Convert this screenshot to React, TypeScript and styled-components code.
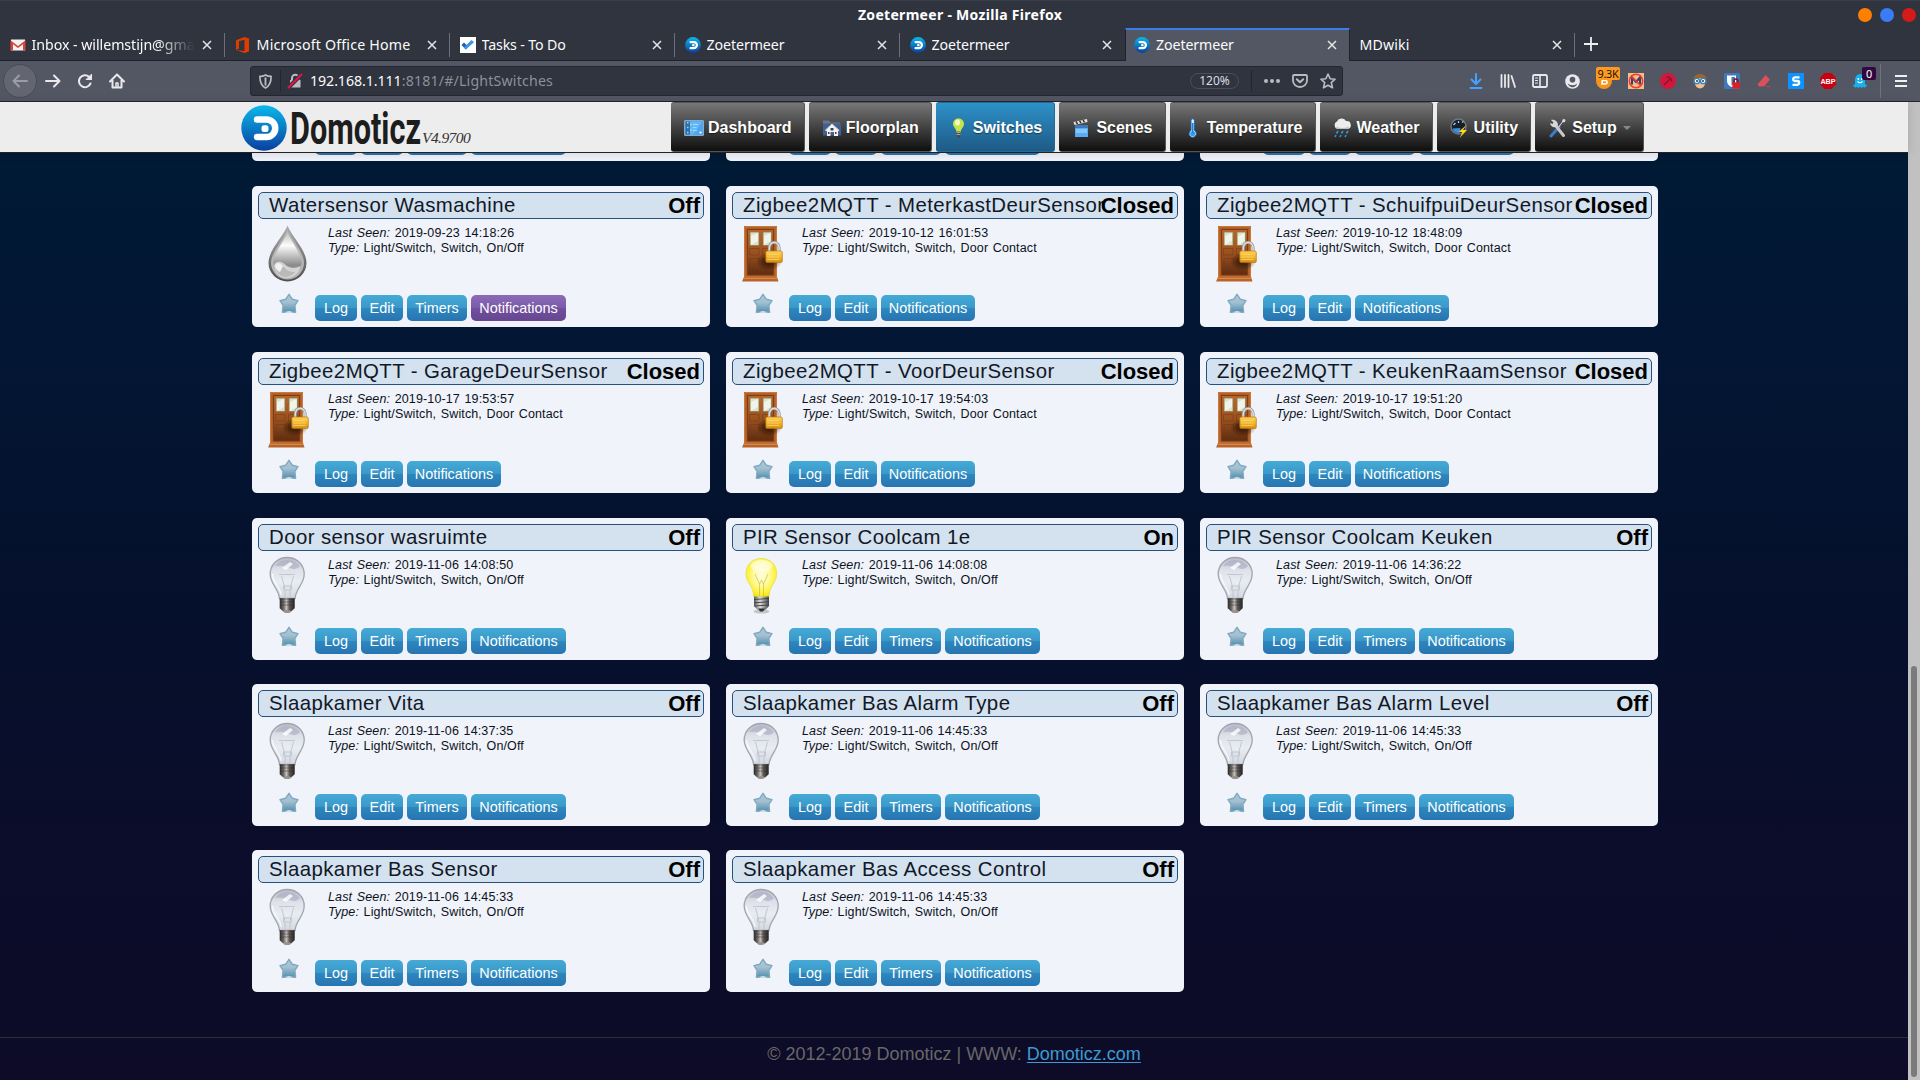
import React from 'react';
import styled, { createGlobalStyle, css } from 'styled-components';

const GlobalStyle = createGlobalStyle`
  * { box-sizing: border-box; }
  html, body { margin: 0; padding: 0; overflow: hidden; }
  body { font-family: "Liberation Sans", Arial, sans-serif; background: #0c0b28; }
`;

const UI_FONT = '"Noto Sans", "Open Sans", sans-serif';

const Screen = styled.div`
  width: 1920px;
  height: 1080px;
  display: flex;
  flex-direction: column;
  overflow: hidden;
`;

/* ---------- Browser window ---------- */

const TitleBar = styled.div`
  height: 28px;
  flex: none;
  display: grid;
  grid-template-columns: 1fr auto 1fr;
  align-items: center;
  background: #2f343f;
  border-top: 1px solid #383d49;
  color: #fff;
  font: bold 14px/27px ${UI_FONT};
  letter-spacing: 0.3px;
`;

const WindowButtons = styled.div`
  display: flex;
  justify-content: flex-end;
  gap: 8px;
  padding-right: 4px;
`;

const WindowButton = styled.span<{ $color: string }>`
  width: 14px;
  height: 14px;
  border-radius: 50%;
  background: ${p => p.$color};
`;

const TabStrip = styled.div`
  height: 33px;
  flex: none;
  display: flex;
  background: #2f343f;
  border-bottom: 1px solid #1f222b;
`;

const Tab = styled.div<{ $active?: boolean; $line?: boolean }>`
  width: 225px;
  height: 32px;
  flex: none;
  display: flex;
  align-items: center;
  gap: 6px;
  padding: 2px 13px 0 9.6px;
  color: #fbfbfb;
  font: 14.2px/20px ${UI_FONT};
  background-repeat: no-repeat;
  ${p => p.$line && css`
    background-image: linear-gradient(#6b6f79, #6b6f79);
    background-size: 1px 24px;
    background-position: 100% 5px;
  `}
  ${p => p.$active && css`
    height: 33px;
    padding: 0 12px 1px 8px;
    background: #535763;
    border-top: 2px solid #3b7bea;
    border-left: 1px solid #1f222b;
    border-right: 1px solid #1f222b;
  `}
`;

const TabLabel = styled.span<{ $fade?: boolean; $tight?: number }>`
  flex: 1;
  min-width: 0;
  white-space: nowrap;
  overflow: hidden;
  letter-spacing: ${p => p.$tight ?? -0.1}px;
  ${p => p.$fade && css`
    mask-image: linear-gradient(to right, #000 76%, transparent 99%);
  `}
`;

const NewTab = styled.div`
  width: 32px;
  display: flex;
  align-items: center;
  justify-content: center;
`;

const Toolbar = styled.div`
  height: 41px;
  flex: none;
  display: flex;
  align-items: center;
  background: #535763;
  border-bottom: 1px solid #23262f;
`;

const NavCluster = styled.div`
  width: 250px;
  display: flex;
  align-items: center;
  padding-left: 3px;
`;

const BackButton = styled.span`
  width: 34px;
  height: 34px;
  border-radius: 50%;
  border: 1px solid #474b56;
  background: #636671;
  display: grid;
  place-items: center;
`;

const IconCell = styled.span<{ $w?: number }>`
  width: ${p => p.$w ?? 32}px;
  height: 32px;
  flex: none;
  display: grid;
  place-items: center;
`;

const UrlBar = styled.div`
  width: 1093px;
  height: 30px;
  display: flex;
  align-items: center;
  background: #2f343f;
  border: 1px solid #232731;
  border-radius: 3px;
`;

const UrlText = styled.span`
  flex: 1;
  padding-left: 2px;
  color: #8d9099;
  font: 14.2px/20px ${UI_FONT};
  letter-spacing: 0.17px;
  b {
    font-weight: 400;
    color: #fbfbfb;
    letter-spacing: -0.07px;
  }
`;

const Divider = styled.span<{ $h?: number; $color?: string; $margin?: string }>`
  width: 1px;
  height: ${p => p.$h ?? 22}px;
  margin: ${p => p.$margin ?? '0'};
  background: ${p => p.$color ?? '#23262f'};
`;

const ZoomPill = styled.span`
  width: 49px;
  height: 16px;
  margin-right: 12px;
  border: 1px solid #4a4e59;
  border-radius: 8px;
  color: #dcdde0;
  text-align: center;
  font: 12px/14px ${UI_FONT};
`;

const Extensions = styled.div`
  display: flex;
  align-items: center;
  margin-left: auto;
`;

const ExtensionCell = styled(IconCell)`
  position: relative;
`;

const Badge = styled.span<{ $bg: string; $fg: string; $x: number; $w: number }>`
  position: absolute;
  top: 2px;
  left: ${p => p.$x}px;
  width: ${p => p.$w}px;
  height: 13px;
  border-radius: 2px;
  background: ${p => p.$bg};
  color: ${p => p.$fg};
  text-align: center;
  font: 10.8px/13px ${UI_FONT};
  letter-spacing: -0.2px;
`;

/* ---------- Page ---------- */

const Viewport = styled.div`
  flex: 1;
  min-height: 0;
  display: flex;
`;

const Page = styled.div`
  width: 1908px;
  display: flex;
  flex-direction: column;
  background: linear-gradient(#001b36 0%, #021734 20%, #05102c 52%, #0b0d2a 76%, #0d0b28 100%);
`;

const Scrollbar = styled.div`
  width: 12px;
  padding: 564px 3px 3px;
  background: #c1c1c1;
`;

const Thumb = styled.div`
  height: 411px;
  border-radius: 3px;
  background: #7b7b7b;
`;

const Header = styled.header`
  height: 51px;
  flex: none;
  display: flex;
  padding-left: 241px;
  background: #ededed;
  border-bottom: 1px solid #222;
  box-shadow: 0 1px 10px rgba(0, 0, 0, 0.12);
  z-index: 1;
`;

const Brand = styled.div`
  width: 430px;
  display: flex;
  align-items: flex-start;
  padding-top: 3px;
`;

const Version = styled.span`
  padding-top: 24px;
  color: #333;
  font: italic 15.6px/18px "Liberation Serif", serif;
  letter-spacing: -0.6px;
`;

const Menu = styled.nav`
  display: flex;
  gap: 4px;
`;

const MenuItem = styled.a<{ $active?: boolean }>`
  height: 50px;
  display: flex;
  align-items: center;
  padding: 1px 12.2px 0 13px;
  border: 1px solid ${p => (p.$active ? '#256b97' : '#555')};
  border-width: 1px 1px 1px 0;
  border-radius: 3px;
  background: ${p => (p.$active
    ? 'linear-gradient(#2d91c8, #1e5a86)'
    : 'linear-gradient(#777 0%, #484848 45%, #0e0e0e 100%)')};
  color: #fff;
  font-size: 16px;
  font-weight: bold;
  text-shadow: 0 1px 1px rgba(0, 0, 0, 0.5);
  svg { margin-right: 4px; }
`;

const Caret = styled.span`
  margin-left: 6px;
  border: 4.5px solid transparent;
  border-top-color: #888;
  border-bottom: 0;
`;

const Content = styled.main`
  flex: 1;
  min-height: 0;
  overflow: hidden;
  display: flex;
  flex-direction: column;
  justify-content: flex-end;
`;

const Grid = styled.div`
  flex: none;
  display: grid;
  grid-template-columns: repeat(3, 458px);
  grid-auto-rows: 141.5px;
  gap: 24.6px 16px;
  padding-left: 252px;
  margin-bottom: 45.25px;
`;

const CardBox = styled.section`
  display: flex;
  flex-direction: column;
  padding: 6px;
  border-radius: 5px;
  background: #f0f3f9;
`;

const CardTitle = styled.div`
  height: 27px;
  display: flex;
  border: 1px solid #26507e;
  border-radius: 5px;
  padding: 0 3px 0 10px;
  background: #d4e1ee;
  white-space: nowrap;
`;

const CardName = styled.span`
  flex: 1;
  min-width: 0;
  color: #111827;
  font-size: 20.4px;
  line-height: 24.6px;
  letter-spacing: 0.42px;
`;

const Status = styled.span`
  color: #000;
  font-size: 22px;
  font-weight: bold;
  line-height: 25.5px;
`;

const CardBody = styled.div`
  height: 76.5px;
  display: flex;
  padding: 5px 0 0 1px;
`;

const Details = styled.div`
  margin: 2px 0 0 11px;
  color: #0c1222;
  font-size: 12.5px;
  line-height: 15px;
  letter-spacing: 0.13px;
  word-spacing: 1px;
`;

const CardActions = styled.div`
  display: flex;
  gap: 4px;
  padding-left: 21px;
`;

const StarSlot = styled.span`
  width: 32px;
  margin-top: -2px;
  svg { display: block; }
`;

const ActionButton = styled.button<{ $w: number; $purple?: boolean }>`
  width: ${p => p.$w}px;
  height: 26px;
  border: 0;
  border-radius: 5px;
  padding: 0;
  color: #fff;
  text-align: center;
  font: 14.4px/26px "Liberation Sans", Arial, sans-serif;
  background: ${p => (p.$purple
    ? 'linear-gradient(#8b6bb7 0%, #7b5aa9 50%, #714fa0 50%, #674690 100%)'
    : 'linear-gradient(#45aad6 0%, #3a98c8 50%, #2d88bf 50%, #2874b0 100%)')};
`;

const Footer = styled.footer`
  flex: none;
  height: 43px;
  border-top: 1px solid #2c2c36;
  color: #686868;
  text-align: center;
  font-size: 18px;
  line-height: 32px;
  a {
    color: #3d9bd0;
    text-decoration: underline;
    text-decoration-thickness: 1px;
    text-underline-offset: 2px;
  }
`;

/* ---------- Drawings ---------- */

const DomoticzMark = ({ size }: { size: number }) => (
  <svg width={size} height={size} viewBox="0 0 46 46" style={{ flex: 'none' }}>
    <defs>
      <linearGradient id="mark" x1="0" y1="0" x2="0" y2="1">
        <stop offset="0" stopColor="#0bb8ea" />
        <stop offset="1" stopColor="#0a3fa0" />
      </linearGradient>
    </defs>
    <circle cx="23" cy="23" r="22.7" fill="url(#mark)" />
    <path d="M16 14.500H25.500A8.700 8.700 0 0 1 25.500 32H16" fill="none" stroke="#fff" strokeWidth="6.500" strokeLinecap="round" />
    <rect x="20.500" y="20.300" width="7" height="6.600" rx="2.500" fill="#fff" />
  </svg>
);

const Wordmark = () => (
  <svg width="135" height="46" viewBox="0 0 135 46">
    <text x="3" y="39" fontFamily='"Roboto", sans-serif' fontWeight="700" fontSize="44" textLength="131" lengthAdjust="spacingAndGlyphs" fill="#1d1d1d">Domoticz</text>
  </svg>
);

const CloseX = () => (
  <svg width="10" height="10" viewBox="0 0 10 10" style={{ flex: 'none' }}>
    <path d="M1 1L9 9M9 1L1 9" stroke="#e6e6e8" strokeWidth="1.5" fill="none" />
  </svg>
);

const Gmail = () => (
  <svg width="16" height="16" viewBox="0 0 16 16">
    <path d="M1 2.500h14v11H1z" fill="#f2f2f2" />
    <path d="M0.500 13.500V3.200L8 9l7.500-5.800v10.300H13V7.200L8 11 3 7.200v6.300z" fill="#d9443a" />
  </svg>
);

const Office = () => (
  <svg width="16" height="16" viewBox="0 0 16 16">
    <path fillRule="evenodd" d="M1 3.300L9.500 0l4.500 1.500v13L9.500 16 1 13l8.500 1V2.700L4 4.200v7.200L1 13z" fill="#e03c00" />
  </svg>
);

const Todo = () => (
  <svg width="16" height="16" viewBox="0 0 16 16">
    <path d="M0 0h16v16H0z" fill="#fff" />
    <path d="M1.500 8L4 5.500l4 4L5.800 12.500z" fill="#1d5db8" />
    <path d="M5.800 12.500L3.800 10.400 11.500 3 14 5.200z" fill="#3a92ea" />
  </svg>
);

const Stroke = ({ children, size = 16, color = '#e9e9eb', w = 2 }: { children: React.ReactNode; size?: number; color?: string; w?: number }) => (
  <svg width={size} height={size} viewBox="0 0 16 16" fill="none" stroke={color} strokeWidth={w} strokeLinecap="round" strokeLinejoin="round">{children}</svg>
);

const Star = () => (
  <svg width="20" height="21" viewBox="0 0 20 21">
    <defs>
      <linearGradient id="star" x1="0" y1="0" x2="0" y2="1">
        <stop offset="0" stopColor="#a9c9dc" />
        <stop offset="0.45" stopColor="#a3c0d0" />
        <stop offset="1" stopColor="#528eae" />
      </linearGradient>
    </defs>
    <path d="M10 1.300L13.400 6.300 19 7.600 15.900 12.400 16.600 19.400Q10 18.200 3.400 19.400L4.100 12.400 1 7.600 6.600 6.300Z" fill="url(#star)" stroke="#7fa9c0" strokeWidth="1.400" strokeLinejoin="round" />
    <path d="M6.500 19.500Q10 17 13.500 19.500" fill="#e6f1f6" />
  </svg>
);

const DropIcon = () => (
  <svg width="58" height="58" viewBox="0 0 58 58">
    <defs>
      <linearGradient id="dropIn" x1="0" y1="0" x2="0" y2="1">
        <stop offset="0" stopColor="#bbb" />
        <stop offset="0.3" stopColor="#fdfdfd" />
        <stop offset="0.75" stopColor="#8a8a8a" />
        <stop offset="1" stopColor="#c8c8c8" />
      </linearGradient>
      <linearGradient id="dropEdge" x1="0" y1="0" x2="0" y2="1">
        <stop offset="0" stopColor="#b0b0b0" />
        <stop offset="1" stopColor="#4e4e4e" />
      </linearGradient>
    </defs>
    <path d="M28.500 1.500C33 13 47.500 26 47.500 39A19 18.500 0 0 1 9.500 39C9.500 26 24 13 28.500 1.500Z" fill="url(#dropEdge)" />
    <path d="M28.500 6C33 16 45 28 45 39A16.500 16.500 0 0 1 12 39C12 28 24 16 28.500 6Z" fill="#b5b5b5" />
    <path d="M28.500 8C32 18 42.500 29 42.500 38.500A14 14 0 0 1 14.500 38.500C14.500 29 25 18 28.500 8Z" fill="url(#dropIn)" />
    <path d="M15 42C16 37 22 36.500 26 40.500S36 45 41.500 42A14 14 0 0 1 27 54C20 54 16 48 15 42Z" fill="#d4d4d4" />
    <path d="M16 42C18 38 22 39 25 43S31 48 36 48A14 14 0 0 1 27 53C20 53 17 47 16 42Z" fill="#bababa" />
    <path d="M16 42C17 38 21 38 24 42L21 48Q17 46 16 42Z" fill="#f1f1f1" />
  </svg>
);

const DoorIcon = () => (
  <svg width="58" height="58" viewBox="0 0 58 58">
    <defs>
      <linearGradient id="door" x1="0" y1="0" x2="0" y2="1">
        <stop offset="0" stopColor="#bb662a" />
        <stop offset="0.55" stopColor="#96501f" />
        <stop offset="1" stopColor="#5c2b10" />
      </linearGradient>
      <linearGradient id="lock" x1="0" y1="0" x2="0" y2="1">
        <stop offset="0" stopColor="#ffd257" />
        <stop offset="0.5" stopColor="#f3b62a" />
        <stop offset="1" stopColor="#d68a12" />
      </linearGradient>
      <radialGradient id="lockShade">
        <stop offset="0" stopColor="#1a0a00" stopOpacity="0.85" />
        <stop offset="1" stopColor="#1a0a00" stopOpacity="0" />
      </radialGradient>
    </defs>
    <path d="M11 2h33V54H11z" fill="#b05d25" />
    <path d="M11.700 2.700h31.600V53H11.700z" fill="none" stroke="#cf8142" />
    <path d="M14.500 5.500h26V51h-26z" fill="url(#door)" stroke="#7c3c17" />
    <path d="M17 8h9v13.500h-9zM30 8h8.500v13.500H30z" fill="#d9e3cb" stroke="#8f7a4c" strokeWidth="0.8" />
    <path d="M18 12l7-3v8l-7 4zM31 12l6.500-3v8l-6.500 4z" fill="#f6f8f1" opacity="0.8" />
    <path d="M16.500 24.500h9.500V31h-9.500zM29.500 24.500H38V31h-8.500zM17 34.500h9.500V49H17zM29.500 34.500H38V49h-8.500z" fill="none" stroke="#733614" strokeWidth="0.7" opacity="0.7" />
    <ellipse cx="36" cy="37.500" rx="13" ry="9" fill="url(#lockShade)" />
    <path d="M11 53h33l1.500 4.500H9z" fill="#b9632a" />
    <path d="M10.500 54.300h34" stroke="#dc9556" strokeWidth="1" />
    <path d="M36.300 28v-4.200a4.900 5.400 0 0 1 9.800 0V28" fill="none" stroke="#8f8f8f" strokeWidth="3" />
    <path d="M36.300 28v-4.200a4.900 5.400 0 0 1 9.800 0V28" fill="none" stroke="#dcdcdc" strokeWidth="1.600" />
    <rect x="32.800" y="27" width="16.500" height="11.600" rx="1.500" fill="url(#lock)" stroke="#b9770f" strokeWidth="0.700" />
    <path d="M34.300 30.500h12M34.300 33h12M34.300 35.500h12" stroke="#fbd978" strokeWidth="0.700" />
  </svg>
);

const BulbIcon = ({ on }: { on?: boolean }) => (on ? (
  <svg width="58" height="58" viewBox="0 0 58 58">
    <defs>
      <radialGradient id="glow" cx="0.5" cy="0.42" r="0.6">
        <stop offset="0" stopColor="#fffde0" />
        <stop offset="0.45" stopColor="#fffa9a" />
        <stop offset="0.8" stopColor="#fdf02e" />
        <stop offset="1" stopColor="#efd900" />
      </radialGradient>
      <linearGradient id="capOn" x1="0" x2="1">
        <stop offset="0" stopColor="#555" />
        <stop offset="0.4" stopColor="#ddd" />
        <stop offset="1" stopColor="#444" />
      </linearGradient>
    </defs>
    <path d="M28.300 2.500C37.500 2.500 43.700 9 43.700 17.500C43.700 27 36 30 36 40.500Q28.500 43 20.700 40.500C20.700 30 13 27 13 17.500C13 9 19 2.500 28.300 2.500Z" fill="url(#glow)" stroke="#e9df5a" strokeWidth="0.900" />
    <ellipse cx="28.500" cy="10" rx="11" ry="6" fill="#fff" opacity="0.55" />
    <path d="M26.500 40V28L22 18M30.500 40V28L35 18M26.500 28l2-4 2 4" fill="none" stroke="#c2b84e" strokeWidth="0.800" opacity="0.8" />
    <ellipse cx="28.500" cy="55.500" rx="8" ry="2" fill="#999" opacity="0.5" />
    <path d="M21 40.500h15v9.500l-4 4.500h-7l-4-4.500z" fill="url(#capOn)" />
    <path d="M21 43.500l15-1M21 46.800l15-1M21.500 50l14-1" stroke="#3d3d3d" strokeWidth="0.900" />
    <path d="M25 52.500h7l-2 3h-3z" fill="#333" />
  </svg>
) : (
  <svg width="58" height="58" viewBox="0 0 58 58">
    <defs>
      <linearGradient id="glass" x1="0" y1="0" x2="0" y2="1">
        <stop offset="0" stopColor="#b9bac8" />
        <stop offset="0.3" stopColor="#dfe1ea" />
        <stop offset="0.6" stopColor="#e9ecf3" />
        <stop offset="1" stopColor="#d3d7df" />
      </linearGradient>
      <linearGradient id="capOff" x1="0" x2="1">
        <stop offset="0" stopColor="#2c2927" />
        <stop offset="0.25" stopColor="#6b6764" />
        <stop offset="0.45" stopColor="#c4c1be" />
        <stop offset="0.65" stopColor="#5d5855" />
        <stop offset="1" stopColor="#262321" />
      </linearGradient>
    </defs>
    <path d="M28.200 1.500C38.500 1.500 45.200 9.500 45.200 18C45.200 28 36.500 33 36 42.500H20.500C20 33 11.200 28 11.200 18C11.200 9.500 18 1.500 28.200 1.500Z" fill="url(#glass)" stroke="#a3a5ae" strokeWidth="1.300" />
    <path d="M16 10Q20 4 28 4T41 10Q37 15 31 12T16 10Z" fill="#a9abc0" opacity="0.6" />
    <path d="M23 12l8-6 3 2-7 6z" fill="#fff" opacity="0.8" />
    <path d="M20 18.500h16M26 33L22.500 20M31 33l3.500-13M24.500 30h8v4h-8zM26 34v8M31 34v8" fill="none" stroke="#bcc4cd" strokeWidth="0.900" />
    <path d="M13.500 18c0 9 7.500 12 8.700 21" fill="none" stroke="#fff" strokeWidth="1.300" opacity="0.8" />
    <path d="M20.700 42.300h15v10l-3.500 3.200h-8l-3.500-3.200z" fill="url(#capOff)" />
    <path d="M20.700 43h15M21 46h14.500M21 49h14.500" stroke="#2f2b29" strokeWidth="0.800" opacity="0.6" />
    <ellipse cx="28.200" cy="55.500" rx="3.500" ry="1.500" fill="#99918c" />
  </svg>
));

const menuIcons: Record<string, React.ReactNode> = {
  Dashboard: (
    <svg width="20" height="18" viewBox="0 0 20 18">
      <rect x="0.500" y="1.500" width="19" height="15" rx="0.500" fill="#4da6f0" stroke="#8fa9c0" />
      <path d="M1.500 2.500h4.500v13H1.500z" fill="#1f6fc4" />
      <path d="M6 2.500h12.500L9 15.500H6z" fill="#5fb8fa" />
      <path d="M3 3.700h1.500M6 5.500h1.500M3 8.500h1.500M6 11h1.500M3 13.500h1.500" stroke="#e9d36b" strokeWidth="1.500" />
      <path d="M9 5.500h5M9 8.500h3.500M9 11.500h4" stroke="#a9dcff" strokeWidth="0.900" />
      <circle cx="16.500" cy="13.500" r="1.100" fill="#fff" />
    </svg>
  ),
  Floorplan: (
    <svg width="20" height="18" viewBox="0 0 20 18">
      <path d="M1 1.500h6l1.500 2H18V16H1z" fill="#6d7788" />
      <path d="M1 4.500h18v12H1z" fill="#40608f" />
      <path d="M3.500 11.500L10 5l7 6.500-1 .8V17h-4v-4H8.500v4H5v-4.700z" fill="#f2f2f2" />
      <path d="M3 11.500L10 5l7.300 6.500" stroke="#d6dae2" fill="none" />
      <path d="M8.500 9h3v2.500h-3zM6 13h1.500v2H6zM13 13h1.500v2H13z" fill="#444" />
    </svg>
  ),
  Switches: (
    <svg width="20" height="20" viewBox="0 0 20 20">
      <path d="M9.500 0.500c3.500 0 5.500 2.600 5.500 5.500 0 3-3 4.500-3.300 8H7.500C7.300 10.500 4 9 4 6 4 3.100 6 .5 9.500.5z" fill="#c5e34b" />
      <ellipse cx="8.500" cy="4.500" rx="2.500" ry="3" fill="#f3fbb8" />
      <path d="M7.600 13.500h4v4.500l-1 1.500h-2l-1-1.500z" fill="#4a4a4a" />
      <path d="M7.600 14.500h4M7.600 16.500h4" stroke="#d0d0d0" strokeWidth="0.700" />
    </svg>
  ),
  Scenes: (
    <svg width="20" height="20" viewBox="0 0 20 20">
      <path d="M1.500 4l13.500-3 .5 3L2.500 7z" fill="#e4e4e4" />
      <path d="M4 3.500l1.500 2.500M7.500 2.700L9 5.200M11 2l1.500 2.300" stroke="#333" strokeWidth="1.500" />
      <path d="M3 7.500h13V19H3z" fill="#58abf5" />
      <path d="M3 7.500h13v2.500H3z" fill="#3a78c0" />
      <path d="M4 11h11v4H4z" fill="#86c6fb" />
    </svg>
  ),
  Temperature: (
    <svg width="20" height="20" viewBox="0 0 20 20">
      <path d="M8 2.500a1.700 1.700 0 0 1 3.400 0v10a3.600 3.600 0 1 1-3.400 0z" fill="#e6f0fa" stroke="#1667b7" />
      <circle cx="9.700" cy="15.700" r="2.500" fill="#2e9bf0" />
      <path d="M9.700 5v10" stroke="#2281dc" strokeWidth="1.700" />
    </svg>
  ),
  Weather: (
    <svg width="20" height="20" viewBox="0 0 20 20">
      <path d="M4.500 11a4 4 0 0 1-.6-7.500A5.200 5.200 0 0 1 13 3a4 4 0 0 1 1.500 8z" fill="#ececec" />
      <path d="M3 8.500q6 3 13 0l-1.500 2.500H4.500z" fill="#bdbdbd" />
      <path d="M5 13l-1.500 2.500M10 13l-1.500 2.500M15 13l-1.500 2.500M3 17l-1 2M8 17l-1 2M13 17l-1 2" stroke="#2e9be0" strokeWidth="1.500" />
    </svg>
  ),
  Utility: (
    <svg width="20" height="20" viewBox="0 0 20 20">
      <circle cx="8.500" cy="8.500" r="7.500" fill="#161f28" stroke="#717a80" strokeWidth="1.400" />
      <path d="M2.500 10.500a6.500 6.500 0 0 0 7 4.500l1-5z" fill="#3b8ce6" />
      <path d="M3.500 7l2-2M8.500 3V5M12 4.500l1.500-1" stroke="#9cd0ff" strokeWidth="1.300" />
      <path d="M16.500 7l-8 7h4l-3 6 7.500-8h-4z" fill="#ffd91e" />
    </svg>
  ),
  Setup: (
    <svg width="20" height="20" viewBox="0 0 20 20">
      <path d="M3 18L11 9" stroke="#3b7ed0" strokeWidth="3" strokeLinecap="round" />
      <path d="M8 8l7.500 9.500" stroke="#c9c9c9" strokeWidth="3" strokeLinecap="round" />
      <path d="M3 2L5.500 4.500 4.500 6 2 5C2.500 8 5 10 8 9L10 7C10 4 7 1 3 2z" fill="#d8d8d8" />
      <path d="M10 9l4-5 .5-2.500L16.500 1l1 1-.5 2-2.500.5-3.500 5z" fill="#ddd" />
    </svg>
  ),
};

const extensionIcons: { icon: React.ReactNode; badge?: React.ReactNode }[] = [
  {
    icon: <svg width="16" height="16" viewBox="0 0 16 16"><circle cx="8" cy="8" r="8" fill="#f7931a" /><path d="M5.500 7.500h3.800a1.700 1.700 0 0 1 0 3.500H6l.5-5" fill="none" stroke="#fff" strokeWidth="1.600" /></svg>,
    badge: <Badge $bg="#ff9a1f" $fg="#111" $x={8} $w={24}>9.3K</Badge>,
  },
  {
    icon: <svg width="16" height="16" viewBox="0 0 16 16"><path d="M0 0h16v16H0z" fill="#f5bf84" /><path d="M4 11.500V4.500l4 4.500 4-4.500v7" fill="none" stroke="#3b3f70" strokeWidth="2" /><circle cx="8" cy="8" r="6.700" fill="none" stroke="#f03b3b" strokeWidth="1.600" /><path d="M3.500 3.500l9 9" stroke="#f03b3b" strokeWidth="1.600" /></svg>,
  },
  {
    icon: <svg width="16" height="16" viewBox="0 0 16 16"><circle cx="8" cy="8" r="8" fill="#d3173c" /><path d="M4 12l6.500-6.500M6.500 4c3-.5 5 1.500 5.500 5" fill="none" stroke="#8f1430" strokeWidth="1.500" /></svg>,
  },
  {
    icon: <svg width="16" height="16" viewBox="0 0 16 16"><path d="M1 9C1 3 4 1 8 1s7 2 7 8l-2 3H3z" fill="#9c6428" /><path d="M3 7q5-4 10 0v4q-1 4-5 4.500Q4 15 3 11z" fill="#f0c08e" /><circle cx="4.800" cy="8" r="2.700" fill="#fff" stroke="#2b7fc2" strokeWidth="1.300" /><circle cx="11.200" cy="8" r="2.700" fill="#fff" stroke="#2b7fc2" strokeWidth="1.300" /><circle cx="5" cy="8" r="0.900" fill="#222" /><circle cx="11" cy="8" r="0.900" fill="#222" /></svg>,
  },
  {
    icon: <svg width="16" height="16" viewBox="0 0 16 16"><rect width="16" height="16" rx="1.500" fill="#3f79bd" /><path d="M3 2.500h9V8c0 3-2 5-4.500 6C5 13 3 11 3 8z" fill="#fff" /><path d="M7.500 4H11v4c0 2-1.500 3.500-3.500 4.500z" fill="#3f79bd" /><path d="M10 10V8a2 2 0 0 1 4 0v2" fill="none" stroke="#881010" strokeWidth="1.500" /><path d="M8.500 9.500H16v6H8.500z" fill="#e02020" /></svg>,
  },
  {
    icon: <svg width="16" height="16" viewBox="0 0 16 16"><path d="M1.500 11.500L9.500 2l4.500 4.500-6 7H3.200z" fill="#d9515c" /><path d="M10 13.500h4.500" stroke="#b34852" strokeWidth="1.200" /></svg>,
  },
  {
    icon: <svg width="16" height="16" viewBox="0 0 16 16"><path d="M0 0h16v16H0z" fill="#0d93ff" /><path d="M11.500 4.300H7A2 1.900 0 0 0 6.500 8h3A1.900 1.900 0 0 1 9 11.800H4.500" fill="none" stroke="#fff" strokeWidth="2.300" /></svg>,
  },
  {
    icon: <svg width="16" height="16" viewBox="0 0 16 16"><path d="M4.700 0h6.600L16 4.700v6.600L11.300 16H4.700L0 11.300V4.700z" fill="#c90010" /><text x="8" y="10.700" textAnchor="middle" fontFamily='"Liberation Sans", sans-serif' fontWeight="bold" fontSize="7.200" fill="#fff">ABP</text></svg>,
  },
  {
    icon: <svg width="16" height="16" viewBox="0 0 16 16"><path d="M3 15V7a5 6 0 0 1 10 0v8l-1.700-1.300L9.700 15 8 13.700 6.300 15l-1.700-1.300zM3 11l-2.500 2L3 14zM13 11l2.500 2L13 14z" fill="#16b0f0" /><circle cx="6.300" cy="6" r="0.900" fill="#fff" /><circle cx="9.700" cy="6" r="0.900" fill="#fff" /><path d="M5.500 8.500q2.500 2.500 5 0" fill="none" stroke="#fff" strokeWidth="1.100" /></svg>,
    badge: <Badge $bg="#33073f" $fg="#fff" $x={18} $w={14}>0</Badge>,
  },
];

/* ---------- Data ---------- */

type Kind = 'drop' | 'door' | 'bulb' | 'bulbOn';
type Device = { name: string; status: string; seen: string; type: string; kind: Kind; timers?: boolean; notified?: boolean };

const DOOR = 'Light/Switch, Switch, Door Contact';
const ONOFF = 'Light/Switch, Switch, On/Off';

const door = (name: string, seen: string): Device => ({ name, status: 'Closed', seen, type: DOOR, kind: 'door' });
const bulb = (name: string, seen: string, on = false): Device => ({
  name, status: on ? 'On' : 'Off', seen, type: ONOFF, kind: on ? 'bulbOn' : 'bulb', timers: true,
});

const devices: Device[] = [
  { name: 'Watersensor Wasmachine', status: 'Off', seen: '2019-09-23 14:18:26', type: ONOFF, kind: 'drop', timers: true, notified: true },
  door('Zigbee2MQTT - MeterkastDeurSensor', '2019-10-12 16:01:53'),
  door('Zigbee2MQTT - SchuifpuiDeurSensor', '2019-10-12 18:48:09'),
  door('Zigbee2MQTT - GarageDeurSensor', '2019-10-17 19:53:57'),
  door('Zigbee2MQTT - VoorDeurSensor', '2019-10-17 19:54:03'),
  door('Zigbee2MQTT - KeukenRaamSensor', '2019-10-17 19:51:20'),
  bulb('Door sensor wasruimte', '2019-11-06 14:08:50'),
  bulb('PIR Sensor Coolcam 1e', '2019-11-06 14:08:08', true),
  bulb('PIR Sensor Coolcam Keuken', '2019-11-06 14:36:22'),
  bulb('Slaapkamer Vita', '2019-11-06 14:37:35'),
  bulb('Slaapkamer Bas Alarm Type', '2019-11-06 14:45:33'),
  bulb('Slaapkamer Bas Alarm Level', '2019-11-06 14:45:33'),
  bulb('Slaapkamer Bas Sensor', '2019-11-06 14:45:33'),
  bulb('Slaapkamer Bas Access Control', '2019-11-06 14:45:33'),
];

const deviceIcons: Record<Kind, React.ReactNode> = {
  drop: <DropIcon />,
  door: <DoorIcon />,
  bulb: <BulbIcon />,
  bulbOn: <BulbIcon on />,
};

const DeviceCard = ({ device }: { device: Device }) => (
  <CardBox>
    <CardTitle>
      <CardName>{device.name}</CardName>
      <Status>{device.status}</Status>
    </CardTitle>
    <CardBody>
      {deviceIcons[device.kind]}
      <Details>
        <div><i>Last Seen:</i> {device.seen}</div>
        <div><i>Type:</i> {device.type}</div>
      </Details>
    </CardBody>
    <CardActions>
      <StarSlot><Star /></StarSlot>
      <ActionButton $w={42}>Log</ActionButton>
      <ActionButton $w={42}>Edit</ActionButton>
      {device.timers && <ActionButton $w={60}>Timers</ActionButton>}
      <ActionButton $w={device.timers ? 95 : 94} $purple={device.notified}>Notifications</ActionButton>
    </CardActions>
  </CardBox>
);

/* Only the lower edge of these cards shows below the header. */
const ScrolledCard = () => (
  <CardBox>
    <CardTitle />
    <CardBody />
    <CardActions>
      <StarSlot />
      {[42, 42, 60, 95].map((w, i) => <ActionButton key={i} $w={w} />)}
    </CardActions>
  </CardBox>
);

const tabs: { label: string; icon?: React.ReactNode; active?: boolean; line?: boolean; fade?: boolean; tight?: number }[] = [
  { label: 'Inbox - willemstijn@gmail.com', icon: <Gmail />, line: true, fade: true, tight: -0.05 },
  { label: 'Microsoft Office Home', icon: <Office />, line: true, tight: 0.18 },
  { label: 'Tasks - To Do', icon: <Todo />, line: true, tight: -0.15 },
  { label: 'Zoetermeer', icon: <DomoticzMark size={16} />, line: true },
  { label: 'Zoetermeer', icon: <DomoticzMark size={16} /> },
  { label: 'Zoetermeer', icon: <DomoticzMark size={16} />, active: true },
  { label: 'MDwiki', line: true, tight: 0.1 },
];

export default function App() {
  return (
    <Screen>
      <GlobalStyle />
      <TitleBar>
        <span />
        <span>Zoetermeer - Mozilla Firefox</span>
        <WindowButtons>
          <WindowButton $color="#ff7f00" />
          <WindowButton $color="#3b7bf5" />
          <WindowButton $color="#d51a1a" />
        </WindowButtons>
      </TitleBar>
      <TabStrip>
        {tabs.map((t, i) => (
          <Tab key={i} $active={t.active} $line={t.line}>
            {t.icon}
            <TabLabel $fade={t.fade} $tight={t.tight}>{t.label}</TabLabel>
            <CloseX />
          </Tab>
        ))}
        <NewTab>
          <svg width="14" height="14" viewBox="0 0 14 14"><path d="M7 0v14M0 7h14" stroke="#f0f0f2" strokeWidth="1.800" /></svg>
        </NewTab>
      </TabStrip>
      <Toolbar>
        <NavCluster>
          <BackButton><Stroke color="#9b9da5"><path d="M15 8H1.500M7 2.500L1.500 8 7 13.500" /></Stroke></BackButton>
          <IconCell><Stroke><path d="M1 8h13.500M9 2.500L14.500 8 9 13.500" /></Stroke></IconCell>
          <IconCell><Stroke><path d="M13.500 10.500A6 6 0 1 1 12 3.700L14 6" /><path d="M14.500 1.500V6.500H9.500z" fill="#e9e9eb" strokeWidth="1" /></Stroke></IconCell>
          <IconCell><Stroke><path d="M1 8.500L8 1.500l7 7M3.500 7v7.500h9V7" /><path d="M7 14v-4h2v4" strokeWidth="1.500" /></Stroke></IconCell>
        </NavCluster>
        <UrlBar>
          <IconCell $w={29}><Stroke size={15} color="#b9bbc1" w={1.8}><path d="M8 1C10 2.200 12 2.500 14 2.500c0 5-1 10-6 12.500C3 12.500 2 7.500 2 2.500 4 2.500 6 2.200 8 1z" /><path d="M8 4.500v7" strokeWidth="2" /></Stroke></IconCell>
          <Divider />
          <IconCell $w={27}>
            <svg width="16" height="16" viewBox="0 0 16 16">
              <path d="M3 7h10.500v7.500H3z" fill="#b9bbc1" />
              <path d="M5 7.500V5a3.200 3.200 0 0 1 6.500 0v2.500" fill="none" stroke="#b9bbc1" strokeWidth="2" />
              <path d="M1.500 14.500L14.500 1.500" stroke="#2f343f" strokeWidth="4" />
              <path d="M1.500 14.500L14.500 1.500" stroke="#e8114b" strokeWidth="2" strokeLinecap="round" />
            </svg>
          </IconCell>
          <UrlText><b>192.168.1.111</b>:8181/#/LightSwitches</UrlText>
          <ZoomPill>120%</ZoomPill>
          <Divider $margin="0 6px 0 0" />
          <IconCell $w={28}><svg width="16" height="4" viewBox="0 0 16 4" fill="#b9bbc1"><circle cx="2" cy="2" r="2" /><circle cx="8" cy="2" r="2" /><circle cx="14" cy="2" r="2" /></svg></IconCell>
          <IconCell $w={28}><Stroke color="#b9bbc1" w={1.8}><path d="M2 2h12a1 1 0 0 1 1 1v4.500a7 6.500 0 0 1-14 0V3a1 1 0 0 1 1-1z" /><path d="M4.800 6.200L8 9.300l3.200-3.100" strokeWidth="2" /></Stroke></IconCell>
          <IconCell $w={28}><Stroke color="#b9bbc1" w={1.6}><path d="M8 1l2.100 4.700 5 .5-3.800 3.400 1.200 5.200L8 12.200l-4.500 2.600 1.200-5.200L.9 6.200l5-.5z" /></Stroke></IconCell>
        </UrlBar>
        <Extensions>
          <IconCell><Stroke color="#45a1ff"><path d="M8 1v9.500M3.500 6.500L8 11l4.500-4.500M2.500 15h11" /></Stroke></IconCell>
          <IconCell><Stroke w={1.8}><path d="M1.500 2v12M5 2v12M8.500 2v12M11.500 3l3.500 11" /></Stroke></IconCell>
          <IconCell><Stroke w={1.8}><rect x="1" y="2" width="14" height="12" rx="1.500" /><path d="M8 2v12" strokeWidth="1.600" /><path d="M3.500 5H5.500M3.500 7.500H5.500M3.500 10H5.500" strokeWidth="1.200" /></Stroke></IconCell>
          <IconCell><svg width="15" height="15" viewBox="0 0 16 16"><circle cx="8" cy="8" r="7.800" fill="#e9e9eb" /><circle cx="8" cy="6" r="3" fill="#535763" /><path d="M3 10q5 4 10 0-1.500 4-5 4t-5-4z" fill="#535763" /></svg></IconCell>
          {extensionIcons.map((e, i) => <ExtensionCell key={i}>{e.icon}{e.badge}</ExtensionCell>)}
          <Divider $h={34} $color="#6f737d" $margin="0 0 0 4px" />
          <IconCell $w={39}><svg width="12" height="12" viewBox="0 0 12 12"><path d="M0 1h12M0 6h12M0 11h12" stroke="#f0f0f2" strokeWidth="2" /></svg></IconCell>
        </Extensions>
      </Toolbar>
      <Viewport>
        <Page>
          <Header>
            <Brand>
              <DomoticzMark size={46} />
              <Wordmark />
              <Version>V4.9700</Version>
            </Brand>
            <Menu>
              {Object.keys(menuIcons).map(label => (
                <MenuItem key={label} $active={label === 'Switches'}>
                  {menuIcons[label]}
                  {label}
                  {label === 'Setup' && <Caret />}
                </MenuItem>
              ))}
            </Menu>
          </Header>
          <Content>
            <Grid>
              <ScrolledCard />
              <ScrolledCard />
              <ScrolledCard />
              {devices.map(d => <DeviceCard key={d.name} device={d} />)}
            </Grid>
            <Footer>
              © 2012-2019 Domoticz | WWW: <a>Domoticz.com</a>
            </Footer>
          </Content>
        </Page>
        <Scrollbar><Thumb /></Scrollbar>
      </Viewport>
    </Screen>
  );
}
